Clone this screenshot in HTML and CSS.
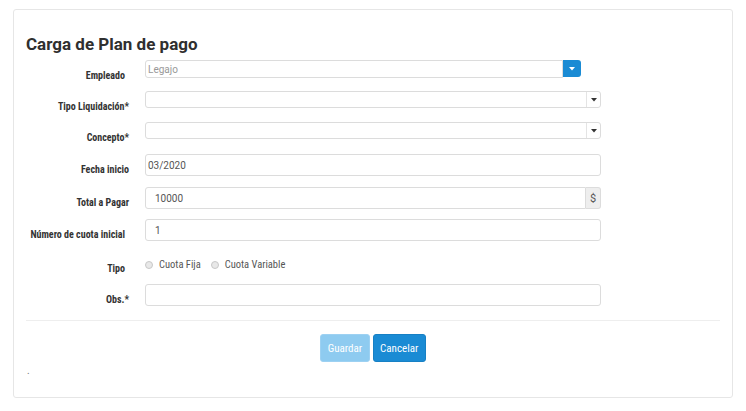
FILE: index.html
```html
<!DOCTYPE html>
<html lang="es">
<head>
<meta charset="utf-8">
<title>Carga de Plan de pago</title>
<link rel="stylesheet" href="styles.css">
</head>
<body>
<div class="page">
  <div class="card">
    <h1 class="title">Carga de Plan de pago</h1>
    <form class="form">
      <div class="form-row h31">
        <label class="label">Empleado</label>
        <div class="control">
          <div class="combo">
            <input class="input short compact" type="text" placeholder="Legajo">
            <span class="btn-drop"><svg width="6" height="4" viewBox="0 0 6 4"><path d="M0 0h6L3 3.5z" fill="#fff"/></svg></span>
          </div>
        </div>
      </div>
      <div class="form-row h31">
        <label class="label inset">Tipo Liquidación*</label>
        <div class="control">
          <div class="select"><span class="select-value"></span><span class="select-arrow"><svg width="6" height="4" viewBox="0 0 6 4"><path d="M0 0h6L3 3.5z" fill="#333"/></svg></span></div>
        </div>
      </div>
      <div class="form-row">
        <label class="label inset">Concepto*</label>
        <div class="control">
          <div class="select"><span class="select-value"></span><span class="select-arrow"><svg width="6" height="4" viewBox="0 0 6 4"><path d="M0 0h6L3 3.5z" fill="#333"/></svg></span></div>
        </div>
      </div>
      <div class="form-row h33">
        <label class="label inset">Fecha inicio</label>
        <div class="control"><input class="input compact" type="text" value="03/2020"></div>
      </div>
      <div class="form-row">
        <label class="label inset">Total a Pagar</label>
        <div class="control">
          <div class="addon-group">
            <input class="input joined" type="text" value="10000">
            <span class="addon">$</span>
          </div>
        </div>
      </div>
      <div class="form-row h33">
        <label class="label">Número de cuota inicial</label>
        <div class="control"><input class="input" type="text" value="1"></div>
      </div>
      <div class="form-row">
        <label class="label radio-label">Tipo</label>
        <div class="control radios">
          <span class="radio"><span class="dot"></span>Cuota Fija</span>
          <span class="radio"><span class="dot"></span>Cuota Variable</span>
        </div>
      </div>
      <div class="form-row last">
        <label class="label inset">Obs.*</label>
        <div class="control"><input class="input" type="text"></div>
      </div>
    </form>
    <hr class="divider">
    <div class="actions">
      <button class="btn btn-disabled" type="button">Guardar</button>
      <button class="btn btn-primary" type="button">Cancelar</button>
    </div>
    <p class="note">.</p>
  </div>
</div>
</body>
</html>
```

FILE: styles.css
```css
html, body {
  margin: 0;
  padding: 0;
  background: #fff;
  font-family: Roboto, "Liberation Sans", sans-serif;
}

.page {
  padding: 9px 13px 0 13px;
}

.card {
  width: 720px;
  height: 389px;
  box-sizing: border-box;
  border: 1px solid #e6e6e6;
  border-radius: 3px;
  padding: 24px 12px 0 12px;
}

.title {
  margin: 0 0 6px 0;
  font-family: Roboto, "Liberation Sans", sans-serif;
  font-weight: 700;
  font-size: 17px;
  line-height: 20px;
  color: #2f2f2f;
}

.form-row {
  display: flex;
  align-items: flex-start;
  height: 32px;
}
.form-row.h31 { height: 31px; }
.form-row.h33 { height: 33px; }
.form-row.last { height: 22px; }

.label {
  width: 103px;
  box-sizing: border-box;
  flex: none;
  margin-right: 16px;
  padding-top: 10px;
  padding-right: 4px;
  text-align: right;
  font-family: "Liberation Sans Narrow", "Roboto Condensed", Roboto, sans-serif;
  font-weight: bold;
  font-size: 10px;
  line-height: 12px;
  color: #333;
}
.label.inset { padding-right: 0; }
.label.radio-label { padding-top: 11px; }

.control {
  width: 456px;
  flex: none;
}

.input {
  display: block;
  box-sizing: border-box;
  width: 100%;
  height: 22px;
  margin: 0;
  border: 1px solid #dcdcdc;
  border-radius: 3px;
  padding: 0 9px;
  font-family: Roboto, sans-serif;
  font-size: 10px;
  color: #555;
  background: #fff;
  outline: none;
}
.input.compact { padding-left: 2px; }
.input::placeholder { color: #999; }

.combo {
  display: flex;
  width: 436px;
}
.input.short {
  height: 18px;
  flex: 1;
  border-radius: 3px 0 0 3px;
}
.btn-drop {
  width: 18px;
  height: 17px;
  flex: none;
  display: flex;
  align-items: center;
  justify-content: center;
  background: #1a8bd4;
  border-radius: 0 3px 3px 0;
}

.select {
  display: flex;
  height: 17px;
  box-sizing: border-box;
  border: 1px solid #dcdcdc;
  border-radius: 3px;
  background: #fff;
}
.select-value { flex: 1; }
.select-arrow {
  width: 13px;
  flex: none;
  display: flex;
  align-items: center;
  justify-content: center;
  border-left: 1px solid #e4e4e4;
}

.addon-group {
  display: flex;
}
.input.joined {
  flex: 1;
  width: auto;
  border-radius: 3px 0 0 3px;
}
.addon {
  width: 15px;
  height: 22px;
  box-sizing: border-box;
  flex: none;
  display: flex;
  align-items: center;
  justify-content: center;
  border: 1px solid #dcdcdc;
  border-left: 0;
  border-radius: 0 3px 3px 0;
  background: #eee;
  font-family: Roboto, sans-serif;
  font-size: 11px;
  color: #555;
}

.radios {
  display: flex;
  align-items: center;
  padding-top: 7px;
  font-family: "Liberation Sans Narrow", "Roboto Condensed", Roboto, sans-serif;
  font-size: 10.5px;
  line-height: 12px;
  color: #555;
}
.radio {
  display: inline-flex;
  align-items: center;
  margin-right: 10px;
}
.dot {
  width: 8px;
  height: 8px;
  box-sizing: border-box;
  border: 1px solid #c8c8c8;
  border-radius: 50%;
  background: #e8e8e8;
  margin-right: 6px;
}

.divider {
  margin: 14px 0 0 0;
  border: 0;
  border-top: 1px solid #eee;
  height: 0;
}

.actions {
  display: flex;
  justify-content: center;
  gap: 3px;
  margin-top: 13px;
}
.btn {
  height: 28px;
  padding: 0 6.5px;
  border-radius: 3px;
  font-family: "Liberation Sans Narrow", "Roboto Condensed", Roboto, sans-serif;
  font-size: 11px;
  color: #fff;
  cursor: pointer;
}
.btn-disabled {
  background: #8ecbf0;
  border: 1px solid #9dd1f2;
}
.btn-primary {
  background: #1a8bd4;
  border: 1px solid #1780c4;
}

.note {
  margin: 3px 0 0 1px;
  font-size: 10px;
  line-height: 12px;
  color: #777;
}
```
